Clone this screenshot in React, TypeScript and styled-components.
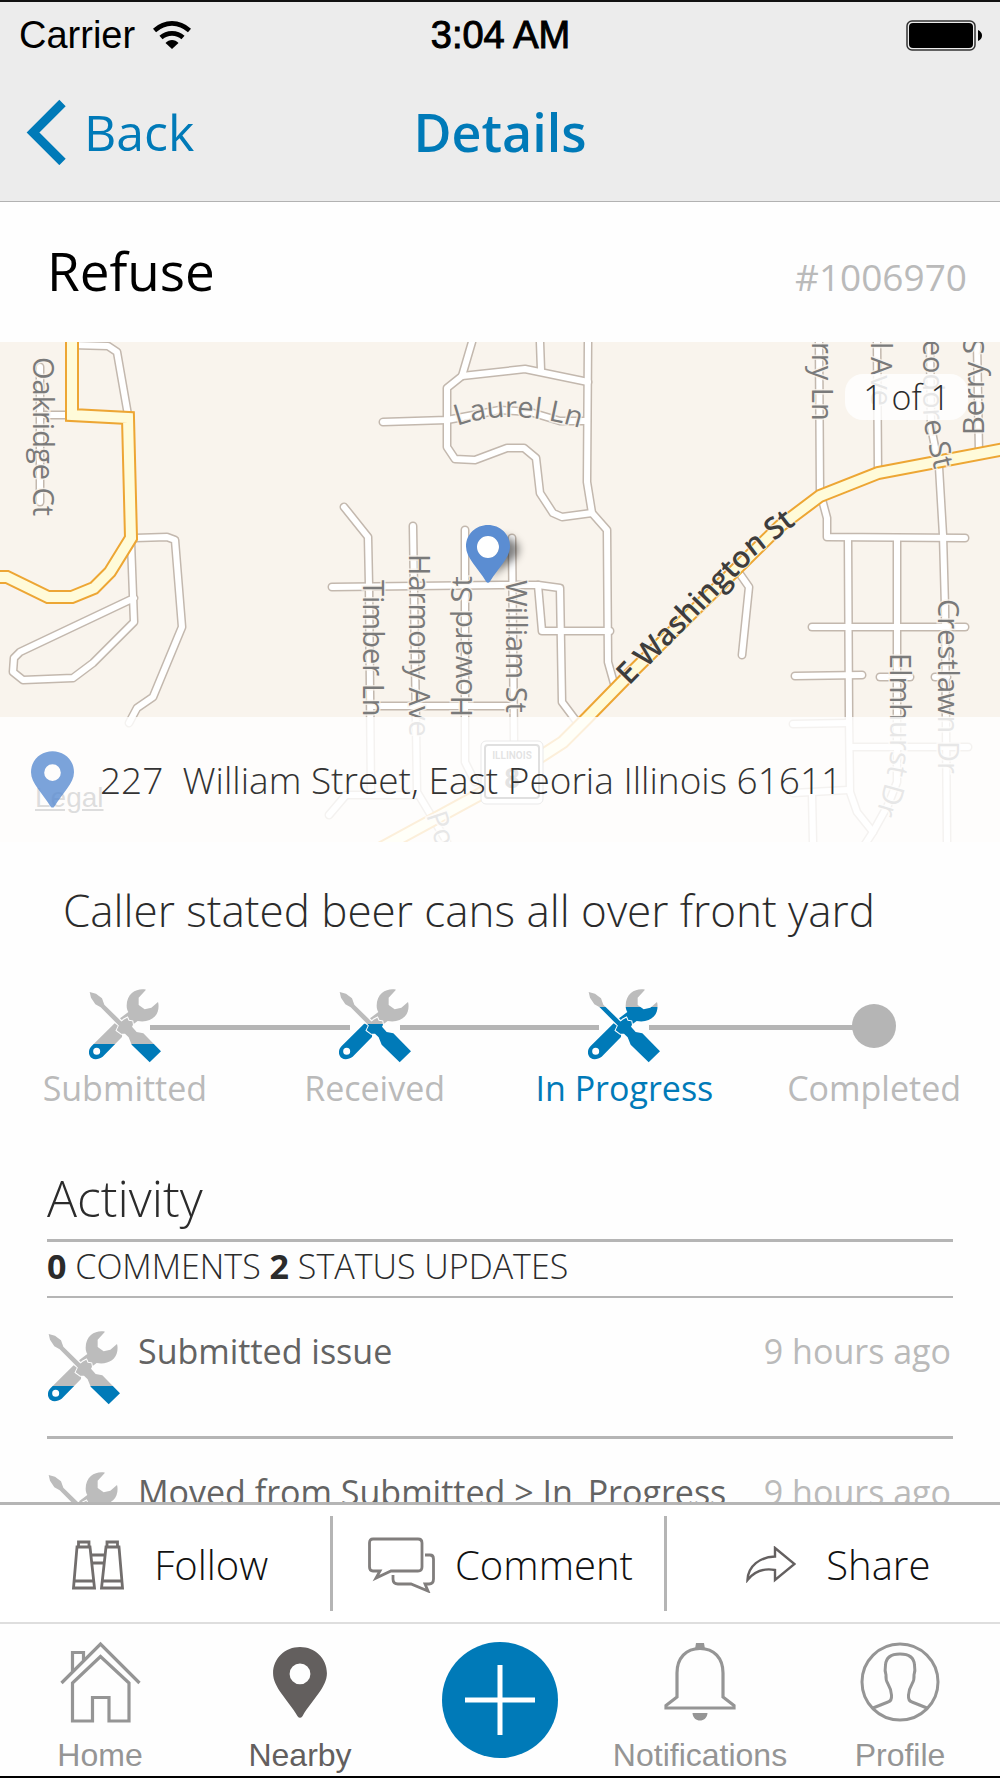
import React, { useId } from "react";
import styled, { createGlobalStyle } from "styled-components";

const color = {
  blue: "#007ab8",
  line: "#b5b5b5",
  muted: "#bababa",
  body: "#2b2b2b",
  strong: "#635f5e",
  tab: "#959595",
};

const GlobalStyle = createGlobalStyle`
  *, *::before, *::after { box-sizing: border-box; }
  body { margin: 0; background: #fff; }
  h1, h2, h3, p, ul, ol { margin: 0; padding: 0; font-weight: inherit; list-style: none; }
  button { font: inherit; color: inherit; background: none; border: 0; padding: 0; cursor: pointer; }
  a { color: inherit; text-decoration: none; }
  svg { display: block; flex: none; }
`;

const Screen = styled.div`
  display: flex;
  flex-direction: column;
  height: 100vh;
  overflow: hidden;
  background: #fefefe;
  border-top: 2px solid #111;
  border-bottom: 2px solid #000;
  font-family: "Open Sans", sans-serif;
  font-weight: 300;
  color: ${color.body};
`;

const TopBar = styled.header`
  flex: none;
  background: #ececec;
  border-bottom: 1px solid #b2b2b2;
`;

const StatusBar = styled.div`
  display: grid;
  grid-template-columns: 1fr auto 1fr;
  align-items: center;
  height: 64px;
  padding: 0 18px 0 19px;
  font: 400 38px/66px "Liberation Sans", Arial, sans-serif;
  color: #000;
`;

const Carrier = styled.div`
  display: flex;
  align-items: center;
  gap: 18px;
`;

const Clock = styled.time`
  -webkit-text-stroke: 1px #000;
`;

const Battery = styled.div`
  justify-self: end;
`;

const NavBar = styled.nav`
  display: grid;
  grid-template-columns: 1fr auto 1fr;
  align-items: center;
  height: 135px;
  padding: 0 26px 3px;
  color: ${color.blue};
`;

const BackButton = styled.button`
  display: flex;
  align-items: center;
  justify-self: start;
  gap: 18px;
  font-size: 50px;
  font-weight: 400;
  line-height: 72px;
`;

const NavTitle = styled.h1`
  font-size: 52px;
  font-weight: 600;
  line-height: 72px;
`;

const Content = styled.main`
  flex: 1;
  min-height: 0;
  overflow-y: auto;
  scrollbar-width: none;
`;

const TitleRow = styled.div`
  display: flex;
  align-items: baseline;
  justify-content: space-between;
  height: 140px;
  padding: 33px 33px 0 47px;
`;

const IssueTitle = styled.h2`
  font-size: 53px;
  font-weight: 400;
  line-height: 72px;
  color: #000;
`;

const IssueNumber = styled.span`
  font-size: 37px;
  line-height: 48px;
  color: ${color.muted};
  font-weight: 400;
`;

const MapFrame = styled.section`
  position: relative;
  height: 500px;
  overflow: hidden;
  background: #f9f4ed;
`;

const MapSvg = styled.svg`
  width: 100%;
  height: 100%;
`;

const LegalLink = styled.a`
  position: absolute;
  left: 35px;
  bottom: 28px;
  font: 400 28px/32px "Liberation Sans", Arial, sans-serif;
  color: #444;
  text-decoration: underline;
`;

const PageBadge = styled.span`
  position: absolute;
  top: 32px;
  right: 32px;
  padding: 0 18px;
  border-radius: 18px;
  background: rgba(255, 255, 255, 0.82);
  font-size: 34px;
  line-height: 46px;
`;

const AddressBar = styled.div`
  position: absolute;
  left: 0;
  right: 0;
  bottom: 0;
  display: flex;
  align-items: center;
  gap: 26px;
  height: 125px;
  padding: 0 31px;
  background: rgba(255, 255, 255, 0.82);
  pointer-events: none;
`;

const Address = styled.p`
  font-size: 37px;
  line-height: 52px;
  white-space: pre;
  color: #333;
`;

const Description = styled.p`
  padding: 36px 63px 0;
  font-size: 44px;
  line-height: 64px;
`;

const Steps = styled.ol`
  display: grid;
  grid-template-columns: repeat(4, 1fr);
  margin-top: 47px;
  padding-right: 1px;
`;

const Step = styled.li<{ $current?: boolean }>`
  position: relative;
  display: flex;
  flex-direction: column;
  align-items: center;
  font-size: 34px;
  font-weight: 400;
  line-height: 48px;
  color: ${(p) => (p.$current ? color.blue : color.muted)};

  &:not(:last-child)::after {
    content: "";
    position: absolute;
    top: 36px;
    left: calc(50% + 25px);
    right: calc(25px - 50%);
    height: 5px;
    background: ${color.line};
  }

  &:nth-last-child(2)::after {
    right: -50%;
  }
`;

const StepMark = styled.div`
  display: grid;
  place-items: center;
  height: 74px;
  margin-bottom: 1px;
`;

const Dot = styled.span`
  position: relative;
  z-index: 1;
  width: 44px;
  height: 44px;
  border-radius: 50%;
  background: ${color.line};
`;

const Activity = styled.section`
  padding: 0 47px;
`;

const ActivityHeading = styled.h3`
  padding: 54px 0 9px;
  font-size: 50px;
  line-height: 64px;
  border-bottom: 3px solid ${color.line};
`;

const Counts = styled.p`
  height: 56px;
  font-size: 34px;
  line-height: 48px;
  border-bottom: 2px solid ${color.line};

  strong { font-weight: 700; }
`;

const Entry = styled.li`
  display: flex;
  gap: 18px;
  height: 141px;
  padding: 33px 2px 0 1px;
  border-bottom: 3px solid ${color.line};
  font-size: 34px;
  font-weight: 400;
  line-height: 40px;
  color: #636363;
`;

const EntryText = styled.span`
  flex: 1;
  white-space: nowrap;
`;

const EntryTime = styled.time`
  color: ${color.muted};
`;

const Actions = styled.div`
  flex: none;
  display: grid;
  grid-template-columns: repeat(3, 1fr);
  padding: 11px 0;
  border-top: 3px solid ${color.line};
  background: #fff;
`;

const Action = styled.button<{ $gap: number; $shift: number }>`
  display: flex;
  align-items: center;
  justify-content: center;
  gap: ${(p) => p.$gap}px;
  padding: 2px 0 0 ${(p) => p.$shift}px;
  height: 95px;
  font-size: 40px;
  line-height: 56px;
  color: #111;

  &:not(:last-child) { border-right: 3px solid ${color.line}; }
`;

const TabBar = styled.nav`
  flex: none;
  display: grid;
  grid-template-columns: repeat(5, 1fr);
  height: 154px;
  border-top: 2px solid #dedede;
  background: #fefefe;
`;

const Tab = styled.a<{ $active?: boolean }>`
  display: flex;
  flex-direction: column;
  align-items: center;
  padding-top: 17px;
  font: 400 32px/36px "Liberation Sans", Arial, sans-serif;
  color: ${(p) => (p.$active ? color.strong : color.tab)};
`;

const TabIcon = styled.span`
  display: grid;
  place-items: center;
  height: 82px;
  margin-bottom: 14px;
`;

const AddButton = styled.button`
  display: grid;
  place-items: center;
  align-self: start;
  justify-self: center;
  width: 116px;
  height: 116px;
  margin-top: 18px;
  border-radius: 50%;
  background: ${color.blue};
`;

/* Screwdriver crossed over a wrench, filled with blue from `level` downwards. */
function ToolsIcon({ level }: { level: number }) {
  const id = useId();
  const fill = `url(#${id})`;
  return (
    <svg width="72" height="74" viewBox="0 0 216 222" aria-hidden="true">
      <linearGradient id={id} gradientUnits="userSpaceOnUse" x1="0" y1="0" x2="0" y2="222">
        <stop offset={level} stopColor="#bcbcbc" />
        <stop offset={level} stopColor={color.blue} />
      </linearGradient>
      <g fill={fill}>
        <path d="M171 2C150-4 113 8 113 50C113 58 115 64 118 69L93 88L105 100L120 95L133 106L146 96C176 102 204 88 208 60C209 52 209 44 207 39L187 56L167 61L149 48L149 26Z" />
        <path d="M77 103L8 171C-4 183-2 200 8 207C18 214 31 210 41 203L99 144L100 120Z M23 176A10 10 0 1 1 23 197A10 10 0 1 1 23 176Z" fillRule="evenodd" />
        <path stroke="#fefefe" strokeWidth="6" paintOrder="stroke" d="M100 96L104 92L115 86L119 95L130 97L132 107L129 113L143 129L163 133L216 187L182 220L128 167L119 145L108 134L97 134L83 124L90 109L86 104Z" />
        <path d="M2 9L21 14L39 28L46 47L104 104L94 114L35 55L19 46L6 26Z" />
      </g>
    </svg>
  );
}

function PinIcon({ width, height, fill, opacity }: { width: number; height: number; fill: string; opacity?: number }) {
  return (
    <svg width={width} height={height} viewBox="0 0 44 58" fill={fill} opacity={opacity} aria-hidden="true">
      <path fillRule="evenodd" d="M22 0C34 0 44 9 44 21.500C44 33 32 43 24 56.500Q22 59 20 56.500C12 43 0 33 0 21.500C0 9 10 0 22 0ZM22 13.500A8.500 8.500 0 1 0 22 30.500A8.500 8.500 0 1 0 22 13.500Z" />
    </svg>
  );
}

const streets = [
  "M72 3L108 4L117 10L128 73",
  "M40 73H72",
  "M40 25V160",
  "M135 196L167 195L175 198L182 285L153 355L137 366L129 381",
  "M131 200L134 280L93 321L73 336L23 338L13 330L14 316L20 310L134 256",
  "M472 0L462 34L447 46V105L455 117L475 118L507 106H524L536 116L540 151L553 171L562 175L592 171",
  "M462 34L525 27L588 40",
  "M540 0L541 28",
  "M588 0L587 140L592 171L607 188L608 320L615 345",
  "M383 80L447 78L500 68L530 70L560 79H587",
  "M344 165L368 195L369 243L371 452",
  "M413 184L417 450L447 500",
  "M465 188V420L475 440",
  "M512 196L514 400",
  "M332 245L500 243H538L560 246L562 360L577 380",
  "M538 243L542 289H610",
  "M372 364H514",
  "M329 473L346 453H415",
  "M819 0L820 150L827 176V195L965 196",
  "M877 0L878 130",
  "M930 0L931 85L939 125L943 193L945 265L947 500",
  "M977 0L979 110",
  "M848 196L849 376L850 450L857 470L873 490L860 510",
  "M897 196V440L888 463L873 490",
  "M812 285H965",
  "M795 334L862 333",
  "M880 335H910",
  "M935 335H947",
  "M735 225L749 245L742 313",
  "M793 382L848 381",
  "M853 405H968",
  "M793 451L848 448",
  "M812 452L813 500",
];

const highways = [
  "M72 -10V73L128 76L131 196L110 230L94 246L72 255H48L7 235H-10",
  "M374 510L477 454L543 413L563 400L587 376L628 334L780 184L820 154L878 131L1010 106",
];

const labels = [
  { id: "oakridge", d: "M33 15V300", text: "Oakridge Ct" },
  { id: "laurel", d: "M457 84Q515 63 595 91", text: "Laurel Ln" },
  { id: "timber", d: "M363 238V480", text: "Timber Ln" },
  { id: "harmony", d: "M409 212V480", text: "Harmony Ave" },
  { id: "howard", d: "M472 375V100", text: "Howard St" },
  { id: "william", d: "M506 238V480", text: "William St" },
  { id: "sherry", d: "M812 -50V160", text: "Sherry Ln" },
  { id: "hill", d: "M871 -36V160", text: "Hill Ave" },
  { id: "theodore", d: "M923 -36V60Q923 84 929 105L942 160", text: "Theodore St" },
  { id: "berry", d: "M984 93V-100", text: "Berry St" },
  { id: "crestlawn", d: "M938 257V480", text: "Crestlawn Dr" },
  { id: "elmhurst", d: "M890 311V410Q890 430 870 490", text: "Elmhurst Dr" },
  { id: "pointer", d: "M426 473L455 560", text: "Pointer" },
];

function StreetMap() {
  return (
    <MapSvg viewBox="0 0 1000 500" preserveAspectRatio="xMidYMid slice" role="img" aria-label="Map of William Street">
      <defs>
        {labels.map((l) => (
          <path key={l.id} id={l.id} d={l.d} />
        ))}
        <path id="washington" d="M629 344L760 210L840 148" />
        <filter id="soft" x="-50%" y="-50%" width="200%" height="200%">
          <feGaussianBlur stdDeviation="4" />
        </filter>
      </defs>
      <g fill="none" strokeLinecap="round" strokeLinejoin="round">
        <g stroke="#c3b8ae" strokeWidth="9">
          {streets.map((d) => <path key={d} d={d} />)}
        </g>
        <g stroke="#fff" strokeWidth="6">
          {streets.map((d) => <path key={d} d={d} />)}
        </g>
        <g stroke="#eda634" strokeWidth="14" strokeLinejoin="miter">
          {highways.map((d) => <path key={d} d={d} />)}
        </g>
        <g stroke="#fffbd9" strokeWidth="10" strokeLinejoin="miter">
          {highways.map((d) => <path key={d} d={d} />)}
        </g>
      </g>
      <g fontFamily="Open Sans, sans-serif" fontSize="29" fontWeight="500" fill="#7a7a7a" stroke="#f9f4ed" strokeWidth="3" strokeOpacity="0.8" paintOrder="stroke">
        {labels.map((l) => (
          <text key={l.id}><textPath href={`#${l.id}`}>{l.text}</textPath></text>
        ))}
        <text fontSize="30" fontWeight="600" fill="#3d3d3d" strokeWidth="2"><textPath href="#washington">E Washington St</textPath></text>
      </g>
      <rect x="481" y="399" width="62" height="63" rx="5" fill="#fff" stroke="#888" strokeWidth="1" />
      <rect x="485" y="403" width="54" height="53" rx="3" fill="#fff" stroke="#555" strokeWidth="2" />
      <g fontFamily="Roboto, sans-serif" fontWeight="700" fill="#666" textAnchor="middle">
        <text x="512" y="417" fontSize="10">ILLINOIS</text>
        <text x="512" y="446" fontSize="28">8</text>
      </g>
      <path d="M490 240C494 225 519 222 519 206A15 15 0 0 0 500 196Z" fill="#000" opacity="0.5" filter="url(#soft)" />
      <g transform="translate(466 183)">
        <circle cx="22" cy="22" r="11" fill="#fff" />
        <path fill="#5b8dd2" fillRule="evenodd" d="M22 0C34 0 44 9 44 21.500C44 33 32 43 24 56.500Q22 59 20 56.500C12 43 0 33 0 21.500C0 9 10 0 22 0ZM22 11A11 11 0 1 0 22 33A11 11 0 1 0 22 11Z" />
      </g>
    </MapSvg>
  );
}

const steps = [
  { label: "Submitted", level: 0.745 },
  { label: "Received", level: 0.477 },
  { label: "In Progress", level: 0.243, current: true },
  { label: "Completed" },
];

const entries = [
  { text: "Submitted issue", time: "9 hours ago", level: 0.745 },
  { text: "Moved from Submitted > In_Progress", time: "9 hours ago", level: 0.477 },
];

export default function App() {
  return (
    <>
      <GlobalStyle />
      <Screen>
        <TopBar>
          <StatusBar>
            <Carrier>
              Carrier
              <svg width="38" height="28" viewBox="0 0 38 28" fill="none" stroke="#000" strokeWidth="4.600" aria-label="Wi-Fi">
                <path d="M1.500 9.500C12 0 26 0 36.500 9.500" />
                <path d="M8 16.500C14 11 24 11 30 16.500" />
                <path d="M12.500 22C16 18 22 18 25.500 22L19 28Z" fill="#000" stroke="none" />
              </svg>
            </Carrier>
            <Clock>3:04 AM</Clock>
            <Battery>
              <svg width="76" height="31" viewBox="0 0 76 31" aria-label="Battery full">
                <rect x="1" y="1" width="68" height="29" rx="5" fill="none" stroke="#333" strokeWidth="1.500" />
                <rect x="3" y="3" width="64" height="25" rx="4" fill="#000" />
                <path d="M72 10Q76 12 76 15.500Q76 19 72 21Z" fill="#000" />
              </svg>
            </Battery>
          </StatusBar>
          <NavBar>
            <BackButton>
              <svg width="40" height="66" viewBox="0 0 40 66" fill="none" stroke={color.blue} strokeWidth="9" aria-hidden="true">
                <path d="M36.500 4L7 33.500L36.500 63" />
              </svg>
              Back
            </BackButton>
            <NavTitle>Details</NavTitle>
          </NavBar>
        </TopBar>

        <Content>
          <TitleRow>
            <IssueTitle>Refuse</IssueTitle>
            <IssueNumber>#1006970</IssueNumber>
          </TitleRow>

          <MapFrame>
            <StreetMap />
            <LegalLink href="#legal">Legal</LegalLink>
            <PageBadge>1 of 1</PageBadge>
            <AddressBar>
              <PinIcon width={43} height={57} fill="#5b8dd2" opacity={0.8} />
              <Address>227  William Street, East Peoria Illinois 61611</Address>
            </AddressBar>
          </MapFrame>

          <Description>Caller stated beer cans all over front yard</Description>

          <Steps>
            {steps.map((s) => (
              <Step key={s.label} $current={s.current}>
                <StepMark>{s.level ? <ToolsIcon level={s.level} /> : <Dot />}</StepMark>
                {s.label}
              </Step>
            ))}
          </Steps>

          <Activity>
            <ActivityHeading>Activity</ActivityHeading>
            <Counts>
              <strong>0</strong> COMMENTS <strong>2</strong> STATUS UPDATES
            </Counts>
            <ul>
              {entries.map((e) => (
                <Entry key={e.text}>
                  <ToolsIcon level={e.level} />
                  <EntryText>{e.text}</EntryText>
                  <EntryTime>{e.time}</EntryTime>
                </Entry>
              ))}
            </ul>
          </Activity>
        </Content>

        <Actions>
          <Action $gap={30} $shift={10}>
            <svg width="52" height="50" viewBox="0 0 52 50" fill="none" stroke="#726e6d" strokeWidth="2.800" aria-hidden="true">
              <path d="M5 7L1.500 48H22.500L18 7ZM6.500 7V2H17V7M2.500 41H22M34 7L29.500 48H50.500L47 7ZM35 7V2H45.500V7M30 41H50M20 15H32M20.500 23H31.500" />
            </svg>
            Follow
          </Action>
          <Action $gap={20} $shift={4}>
            <svg width="67" height="56" viewBox="0 0 67 56" fill="none" stroke="#817e7d" strokeWidth="2.800" aria-hidden="true">
              <path d="M5 2H50Q54 2 54 6V30Q54 34 50 34H23L8 41L12 34H5Q1.500 34 1.500 30V6Q1.500 2 5 2Z" />
              <path d="M57 18H62Q65.500 18 65.500 22V42Q65.500 47 61 47H57L60 54L43 47H30Q25 47 25 42V38" />
            </svg>
            Comment
          </Action>
          <Action $gap={30} $shift={10}>
            <svg width="50" height="37" viewBox="0 0 50 37" fill="none" stroke="#646060" strokeWidth="2.400" aria-hidden="true">
              <path d="M29 2L48.500 18L29 34V24C18 22 8 26 1.500 34C2 20 14 11 29 10.500Z" />
            </svg>
            Share
          </Action>
        </Actions>

        <TabBar>
          <Tab href="#home">
            <TabIcon>
              <svg width="81" height="82" viewBox="0 0 81 82" fill="none" stroke={color.tab} strokeWidth="3.200" aria-hidden="true">
                <path d="M1.500 42L40.500 3L79.500 42" />
                <path d="M12.500 30V11.500H23.500V19" />
                <path d="M12.500 42V80H32.500V56.500H49V80H69V42L40.500 15.500Z" />
              </svg>
            </TabIcon>
            Home
          </Tab>
          <Tab href="#nearby" $active>
            <TabIcon>
              <PinIcon width={54} height={71} fill={color.strong} />
            </TabIcon>
            Nearby
          </Tab>
          <AddButton aria-label="Add">
            <svg width="70" height="70" viewBox="0 0 70 70" stroke="#fff" strokeWidth="5" aria-hidden="true">
              <path d="M35 0V70M0 35H70" />
            </svg>
          </AddButton>
          <Tab href="#notifications">
            <TabIcon>
              <svg width="72" height="78" viewBox="0 0 72 78" fill="none" stroke={color.tab} strokeWidth="3.200" aria-hidden="true">
                <path d="M2 65V62.500L13 54V30C13 15 22 5.500 36 5.500C50 5.500 59 15 59 30V54L70 62.500V65Z" />
                <path d="M32 0H40L41 6H31ZM28.500 70H43.500C43 80 29 80 28.500 70Z" fill={color.tab} stroke="none" />
              </svg>
            </TabIcon>
            Notifications
          </Tab>
          <Tab href="#profile">
            <TabIcon>
              <svg width="80" height="80" viewBox="0 0 80 80" fill="none" stroke={color.tab} strokeWidth="3" aria-hidden="true">
                <circle cx="40" cy="40" r="38" />
                <path d="M13 66L28 60Q32 59 31.500 53Q31 47 28 42Q25.500 38 26 33Q24.500 29 25.500 23C26 15 31 12 40 12C49 12 54 15 54.500 23Q55.500 29 54 33Q54.500 38 52 42Q49 47 48.500 53Q48 59 52 60L67 66" />
              </svg>
            </TabIcon>
            Profile
          </Tab>
        </TabBar>
      </Screen>
    </>
  );
}
